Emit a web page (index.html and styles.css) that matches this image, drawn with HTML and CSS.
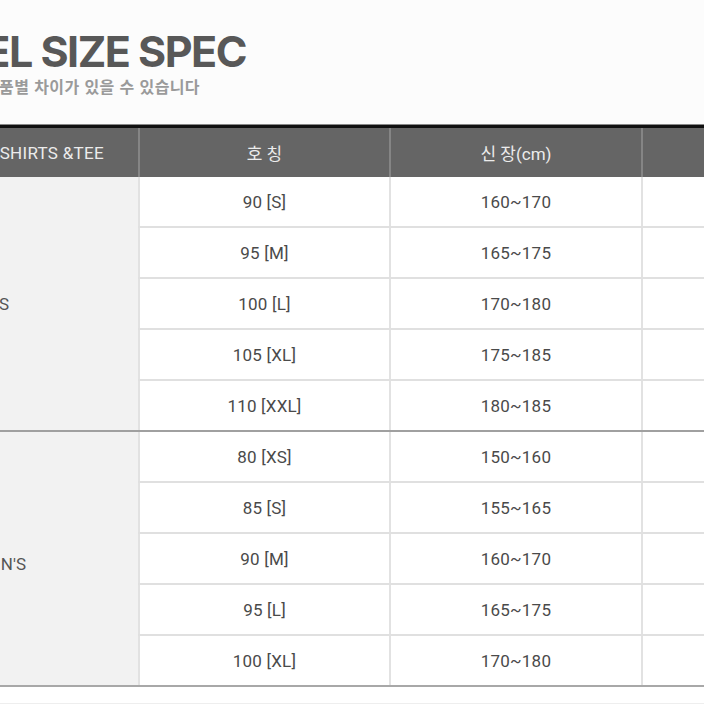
FILE: index.html
```html
<!DOCTYPE html>
<html lang="ko">
<head>
<meta charset="utf-8">
<link rel="stylesheet" href="styles.css">
</head>
<body>
<div class="page">
  <header class="head">
    <div class="title"><span>EL SIZE SPEC</span></div>
    <div class="subtitle"><span>품별 차이가 있을 수 있습니다</span></div>
  </header>

  <div class="chart">
    <div class="thead">
      <div class="cat"><span>SHIRTS &amp;TEE</span></div>
      <div class="hcell">호 칭</div>
      <div class="hcell">신 장(cm)</div>
      <div class="hcell"></div>
    </div>

    <div class="group">
      <div class="label men"><span>S</span></div>
      <div class="rows">
        <div class="row"><div class="cell">90 [S]</div><div class="cell">160~170</div><div class="cell"></div></div>
        <div class="row"><div class="cell">95 [M]</div><div class="cell">165~175</div><div class="cell"></div></div>
        <div class="row"><div class="cell">100 [L]</div><div class="cell">170~180</div><div class="cell"></div></div>
        <div class="row"><div class="cell">105 [XL]</div><div class="cell">175~185</div><div class="cell"></div></div>
        <div class="row"><div class="cell">110 [XXL]</div><div class="cell">180~185</div><div class="cell"></div></div>
      </div>
    </div>

    <div class="group last">
      <div class="label women"><span>N'S</span></div>
      <div class="rows">
        <div class="row"><div class="cell">80 [XS]</div><div class="cell">150~160</div><div class="cell"></div></div>
        <div class="row"><div class="cell">85 [S]</div><div class="cell">155~165</div><div class="cell"></div></div>
        <div class="row"><div class="cell">90 [M]</div><div class="cell">160~170</div><div class="cell"></div></div>
        <div class="row"><div class="cell">95 [L]</div><div class="cell">165~175</div><div class="cell"></div></div>
        <div class="row"><div class="cell">100 [XL]</div><div class="cell">170~180</div><div class="cell"></div></div>
      </div>
    </div>
  </div>
  <div class="foot"></div>
</div>
</body>
</html>
```

FILE: styles.css
```css
html, body {
  margin: 0;
  padding: 0;
  background: #ffffff;
  overflow: hidden;
}

.page {
  width: 704px;
  height: 704px;
  overflow: hidden;
  font-family: Roboto, "Noto Sans CJK KR", sans-serif;
  color: #444;
}

.head {
  height: 125px;
  background: #fcfcfc;
  box-sizing: border-box;
  padding-top: 29px;
}

.title {
  width: 246px;
  display: flex;
  justify-content: flex-end;
  white-space: nowrap;
  font-family: Inter, "Noto Sans", sans-serif;
  font-weight: 700;
  font-size: 43px;
  line-height: 44px;
  letter-spacing: -1.5px;
  color: #585858;
}

.subtitle {
  width: 200px;
  display: flex;
  justify-content: flex-end;
  white-space: nowrap;
  margin-top: 3px;
  font-family: "Noto Sans CJK KR", sans-serif;
  font-weight: 700;
  font-size: 16px;
  line-height: 20px;
  letter-spacing: 0.4px;
  color: #9a9a9a;
}

.chart {
  width: 892px;
  border-top: 3px solid #111;
  box-shadow: 0 -1px 0 #888;
}

.thead {
  display: flex;
  height: 49px;
  background: #656565;
  color: #ececec;
  font-size: 17px;
}

.cat {
  width: 138px;
  flex: none;
  display: flex;
  justify-content: flex-end;
  align-items: center;
  padding-right: 34px;
  box-sizing: border-box;
  white-space: nowrap;
  letter-spacing: 0.3px;
}

.hcell {
  width: 251px;
  flex: none;
  display: flex;
  align-items: center;
  justify-content: center;
  border-left: 2px solid #858585;
  box-sizing: border-box;
}

.hcell:nth-child(2) { width: 251px; }
.hcell:nth-child(3) { width: 252px; }

.group {
  display: flex;
  border-bottom: 2px solid #a0a0a0;
}

.group.last {
  border-bottom-color: #a8a8a8;
}

.label {
  width: 138px;
  flex: none;
  background: #f2f2f2;
  display: flex;
  justify-content: flex-end;
  align-items: center;
  box-sizing: border-box;
  white-space: nowrap;
  font-size: 17px;
  color: #555;
}

.label.men { padding-right: 129px; }
.label.women { padding-right: 112px; padding-top: 10px; }

.rows {
  display: flex;
  flex-direction: column;
}

.row {
  display: flex;
  height: 51px;
  box-sizing: border-box;
  border-bottom: 2px solid #e0e0e0;
}

.row:last-child {
  border-bottom: none;
  height: 49px;
}

.cell {
  width: 251px;
  flex: none;
  display: flex;
  align-items: center;
  justify-content: center;
  border-left: 2px solid #e2e2e2;
  box-sizing: border-box;
  font-size: 17px;
  color: #4a4a4a;
  letter-spacing: 0.2px;
}

.cell:nth-child(2) { width: 252px; }

.foot {
  height: 16px;
  border-bottom: 1px solid #eeeeee;
}
```
